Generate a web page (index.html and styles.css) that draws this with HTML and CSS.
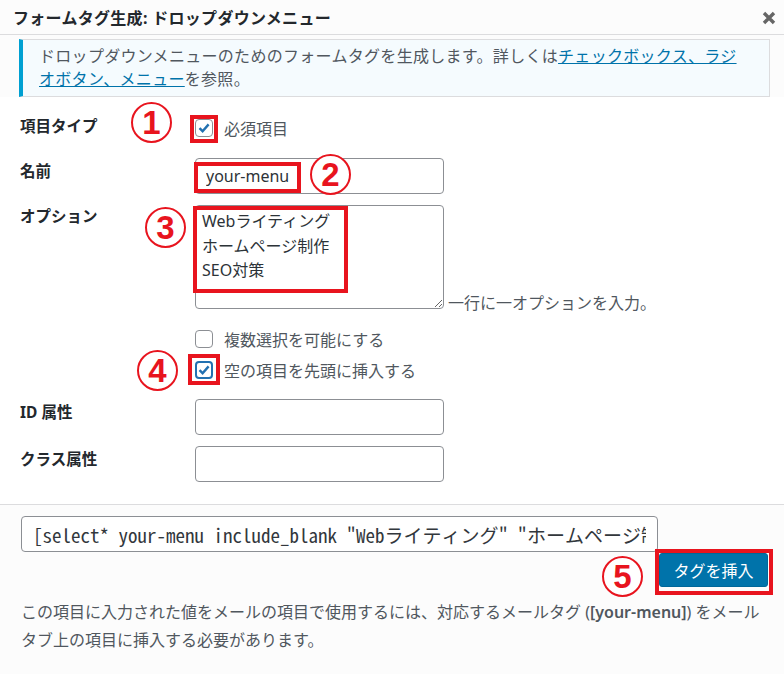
FILE: index.html
```html
<!DOCTYPE html>
<html lang="ja">
<head>
    <meta charset="UTF-8">
    <meta name="viewport" content="width=device-width, initial-scale=1.0">
    <title>フォームタグ生成: ドロップダウンメニュー</title>
    <link rel="stylesheet" href="styles.css">
</head>
<body>
<div class="dialog">
    <div class="header">
        <h1>フォームタグ生成: ドロップダウンメニュー</h1>
        <span class="close">
            <svg width="14" height="14" viewBox="0 0 14 14"><path d="M2 2 L12 12 M12 2 L2 12" stroke="#666" stroke-width="3.4" stroke-linecap="butt"/></svg>
        </span>
    </div>

    <div class="notice">
        ドロップダウンメニューのためのフォームタグを生成します。詳しくは<a href="#">チェックボックス、ラジオボタン、メニュー</a>を参照。
    </div>

    <div class="form">
        <div class="row row-type">
            <div class="row-label">項目タイプ</div>
            <div class="row-field">
                <label class="check"><span class="box checked"><svg width="14" height="14" viewBox="0 0 14 14"><path d="M2.5 7.2 L5.6 10.2 L11.6 3.4" fill="none" stroke="#2271b1" stroke-width="2.4"/></svg></span>必須項目</label>
            </div>
        </div>

        <div class="row">
            <div class="row-label">名前</div>
            <div class="row-field">
                <input type="text" class="text" value="your-menu">
            </div>
        </div>

        <div class="row row-options">
            <div class="row-label">オプション</div>
            <div class="row-field options">
                <textarea class="values">Webライティング
ホームページ制作
SEO対策</textarea>
                <span class="desc">一行に一オプションを入力。</span>
            </div>
        </div>

        <div class="row row-checks">
            <div class="row-label"></div>
            <div class="row-field">
                <label class="check line"><span class="box"></span>複数選択を可能にする</label>
                <label class="check line"><span class="box checked focus"><svg width="14" height="14" viewBox="0 0 14 14"><path d="M2.5 7.2 L5.6 10.2 L11.6 3.4" fill="none" stroke="#2271b1" stroke-width="2.4"/></svg></span>空の項目を先頭に挿入する</label>
            </div>
        </div>

        <div class="row row-id">
            <div class="row-label">ID 属性</div>
            <div class="row-field"><input type="text" class="text"></div>
        </div>

        <div class="row">
            <div class="row-label">クラス属性</div>
            <div class="row-field"><input type="text" class="text"></div>
        </div>
    </div>

    <div class="footer">
        <input type="text" class="tag" value='[select* your-menu include_blank "Webライティング" "ホームページ制作" "SEO対策"]'>
        <div class="actions">
            <button class="insert">タグを挿入</button>
        </div>
        <p class="mail-note">この項目に入力された値をメールの項目で使用するには、対応するメールタグ (<strong>[your-menu]</strong>) をメールタブ上の項目に挿入する必要があります。</p>
    </div>

    <!-- 注釈 -->
    <span class="mark" style="left:131px; top:102px;">1</span>
    <span class="mark" style="left:310px; top:154px;">2</span>
    <span class="mark" style="left:145px; top:207px;">3</span>
    <span class="mark" style="left:137px; top:350px;">4</span>
    <span class="mark" style="left:602px; top:556px;">5</span>

    <span class="frame" style="left:190px; top:115px; width:28px; height:28px;"></span>
    <span class="frame" style="left:194px; top:162px; width:107px; height:31px;"></span>
    <span class="frame" style="left:193px; top:206px; width:155px; height:87px;"></span>
    <span class="frame" style="left:188px; top:354px; width:32px; height:31px;"></span>
    <span class="frame" style="left:655px; top:549px; width:118px; height:46px;"></span>
</div>
</body>
</html>
```

FILE: styles.css
```css
body {
    margin: 0;
    font-family: "Noto Sans", "Noto Sans CJK JP", sans-serif;
    color: #50575e;
    background: #fff;
}
.dialog {
    position: relative;
    width: 784px;
    min-height: 674px;
    background: #fcfcfc;
}
.header {
    height: 34px;
    border-bottom: 1px solid #dcdcde;
    display: flex;
    align-items: center;
    justify-content: space-between;
    padding: 0 8px 0 13px;
    background: #fcfcfc;
}
.header h1 {
    margin: 0;
    font-size: 16px;
    font-weight: bold;
    color: #23282d;
    letter-spacing: 0.3px;
}
.close {
    display: flex;
    margin-top: 1px;
}
.notice {
    margin: 4px 14px 0 19px;
    padding: 5px 20px 5px 16px;
    background: #f5fbfe;
    border: 1px solid #dcdcde;
    border-left: 4px solid #00a0d2;
    font-size: 16px;
    line-height: 23px;
    letter-spacing: 0.3px;
    color: #50575e;
}
.notice a {
    color: #0073aa;
}
.form {
    background: #fff;
    padding: 18px 0 22px 20px;
    border-bottom: 1px solid #dcdcde;
}
.row {
    display: flex;
    margin-top: 11px;
}
.row-type {
    margin-top: 0;
}
.row-type + .row {
    margin-top: 17px;
}
.row-checks,
.row-id {
    margin-top: 14px;
}
.row-label {
    width: 175px;
    flex: none;
    padding-top: 2px;
    font-size: 15.5px;
    line-height: 22px;
    font-weight: bold;
    color: #23282d;
}
.row-options .row-label,
.row-type .row-label {
    padding-top: 0;
}
.row-field {
    flex: 1;
}
.check {
    display: flex;
    align-items: center;
    height: 26px;
    font-size: 16px;
    color: #50575e;
}
.check.line {
    height: 31px;
}
.box {
    width: 18px;
    height: 18px;
    box-sizing: border-box;
    border: 1px solid #8c8f94;
    border-radius: 4px;
    background: #fff;
    margin-right: 11px;
    display: flex;
    align-items: center;
    justify-content: center;
}
.box.focus {
    border: 2px solid #2271b1;
}
.text {
    width: 249px;
    height: 36px;
    box-sizing: border-box;
    border: 1px solid #8c8f94;
    border-radius: 4px;
    padding: 0 10px;
    font-family: "Noto Sans", "Noto Sans CJK JP", sans-serif;
    font-size: 16px;
    color: #2c3338;
    display: block;
    margin: 0;
}
.options {
    display: flex;
    align-items: flex-end;
    gap: 4px;
}
.values {
    width: 249px;
    height: 104px;
    box-sizing: border-box;
    border: 1px solid #8c8f94;
    border-radius: 4px;
    padding: 3px 6px;
    font-family: "Noto Sans", "Noto Sans CJK JP", sans-serif;
    font-size: 16px;
    line-height: 24.5px;
    color: #2c3338;
    margin: 0;
    display: block;
}
.desc {
    font-size: 16px;
    line-height: 20px;
    margin-bottom: -4px;
    color: #50575e;
}
.footer {
    padding: 11px 16px 0 21px;
    background: #fcfcfc;
}
.tag {
    display: block;
    width: 637px;
    height: 36px;
    box-sizing: border-box;
    margin: 0;
    border: 1px solid #8c8f94;
    border-radius: 4px;
    padding: 0 11px;
    font-family: "Noto Sans Mono CJK JP", "DejaVu Sans Mono", "Noto Sans CJK JP", monospace;
    font-size: 19px;
    color: #32373c;
    background: #fff;
}
.actions {
    text-align: right;
    margin-top: 1px;
    line-height: 0;
}
.insert {
    width: 109px;
    height: 34px;
    background: #0073aa;
    border: 1px solid #006799;
    border-radius: 3px;
    color: #fff;
    font-family: "Noto Sans", "Noto Sans CJK JP", sans-serif;
    font-size: 16px;
    cursor: pointer;
}
.mail-note {
    margin: 11px 0 0;
    font-size: 16px;
    line-height: 28px;
    color: #50575e;
}
.mail-note strong {
    font-weight: 600;
}
.mark {
    position: absolute;
    width: 41px;
    height: 41px;
    box-sizing: border-box;
    border: 2px solid #e8141e;
    border-radius: 50%;
    background: #fff;
    color: #e8141e;
    font-family: "Liberation Sans", sans-serif;
    font-weight: bold;
    font-size: 33px;
    line-height: 37px;
    text-align: center;
}
.frame {
    position: absolute;
    box-sizing: border-box;
    border: 4px solid #e8141e;
}
```
